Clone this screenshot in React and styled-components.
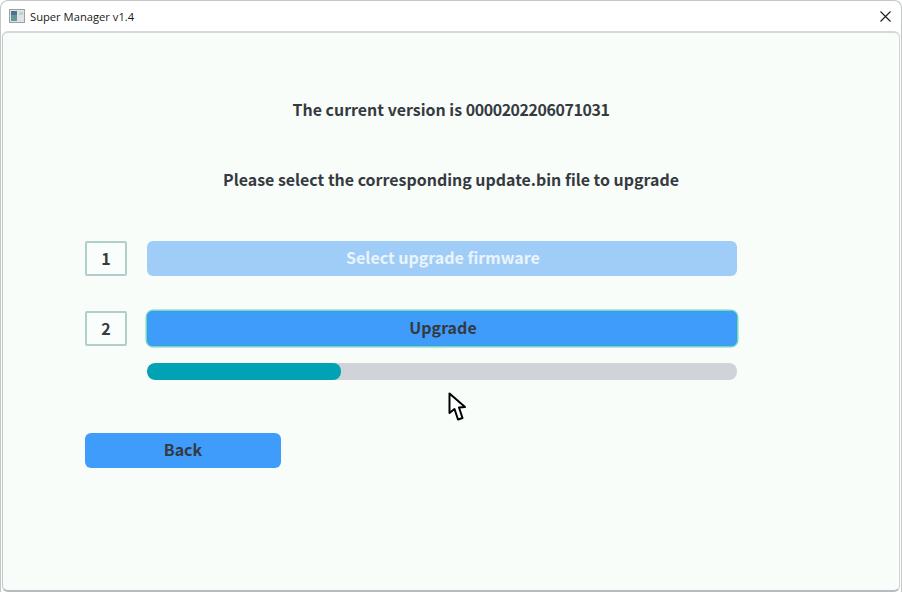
import React from 'react';
import styled, {createGlobalStyle} from 'styled-components';

const GlobalStyle = createGlobalStyle`
  html, body {
    margin: 0;
    padding: 0;
    background: #fff;
  }
  * {
    box-sizing: border-box;
  }
`;

export default function App() {
  return (
    <>
      <GlobalStyle />
      <Window>
        <TitleBar>
          <AppIcon viewBox="0 0 16 16">
            <rect x="0.5" y="1.5" width="15" height="13" fill="#dfe3e5" stroke="#9aa1a5" />
            <rect x="2" y="3" width="6" height="10" fill="#5f9a98" />
            <rect x="2" y="3" width="6" height="4" fill="#4f7286" />
            <rect x="10" y="4" width="4" height="3" fill="#b5d8c2" />
          </AppIcon>
          <Title>Super Manager v1.4</Title>
          <CloseIcon viewBox="0 0 11 11">
            <path d="M0.5 0.5 L10.5 10.5 M10.5 0.5 L0.5 10.5" stroke="#1a1a1a" strokeWidth="1.1" fill="none" />
          </CloseIcon>
        </TitleBar>
        <Panel>
          <Message>
            The current version is <VersionNumber>0000202206071031</VersionNumber>
          </Message>
          <Message $top={46}>Please select the corresponding update.bin file to upgrade</Message>
          <Steps>
            <StepRow>
              <StepNumber>1</StepNumber>
              <ActionButton disabled>Select upgrade firmware</ActionButton>
            </StepRow>
            <StepRow>
              <StepNumber>2</StepNumber>
              <ActionButton $focused>Upgrade</ActionButton>
            </StepRow>
            <ProgressTrack>
              <ProgressFill style={{width: '32.9%'}} />
            </ProgressTrack>
          </Steps>
          <BackButton>Back</BackButton>
        </Panel>
        <Cursor viewBox="0 0 20 32">
          <path
            d="M2.5 2.5 L2.5 22 L7.5 18 L11 28.5 L15.5 27 L12 16.5 L18 16 Z"
            fill="#fff"
            stroke="#000"
            strokeWidth="2"
            strokeLinejoin="round"
          />
        </Cursor>
      </Window>
    </>
  );
}

const Window = styled.div`
  position: relative;
  width: 902px;
  height: 592px;
  display: flex;
  flex-direction: column;
  background: #fff;
  border: 1px solid #c4c6c8;
  border-bottom: none;
  border-radius: 8px 8px 0 0;
  overflow: hidden;
`;

const TitleBar = styled.div`
  height: 30px;
  flex-shrink: 0;
  display: flex;
  align-items: center;
  padding: 0 10px 0 8px;
`;

const AppIcon = styled.svg`
  width: 16px;
  height: 16px;
  margin-right: 5px;
`;

const Title = styled.span`
  flex: 1;
  font-family: "Open Sans", "Noto Sans", sans-serif;
  font-size: 11.2px;
  color: #1a1a1a;
`;

const CloseIcon = styled.svg`
  width: 11px;
  height: 11px;
`;

const Panel = styled.div`
  flex: 1;
  margin: 0 1px 0 1px;
  padding: 64px 82px 0;
  display: flex;
  flex-direction: column;
  background: #f8fdfa;
  border-style: solid;
  border-width: 2px 1px 2px 1px;
  border-color: #cfdae0 #cdd3d6 #b4bcbf #c2c9cc;
  border-radius: 6px;
  font-family: "Noto Sans CJK SC", "Noto Sans", sans-serif;
  color: #353a40;
`;

const Message = styled.div`
  margin: ${(p) => p.$top || 0}px -82px 0;
  line-height: 24px;
  font-size: 15.95px;
  font-weight: 700;
  text-align: center;
`;

const VersionNumber = styled.span`
  letter-spacing: -0.42px;
`;

const Steps = styled.div`
  margin-top: 50px;
  display: flex;
  flex-direction: column;
`;

const StepRow = styled.div`
  display: flex;
  align-items: center;
  gap: 20px;
  height: 35px;
  margin-bottom: 35px;
`;

const StepNumber = styled.div`
  width: 42px;
  height: 35px;
  display: flex;
  align-items: center;
  justify-content: center;
  padding-bottom: 2px;
  background: #f9fdfb;
  border: 2px solid #b0cfca;
  border-radius: 2px;
  font-size: 16px;
  font-weight: 700;
`;

const ActionButton = styled.button`
  width: 590px;
  height: 35px;
  border: none;
  border-radius: 6px;
  background: #409cfb;
  color: #353a40;
  font-family: inherit;
  font-size: 16px;
  font-weight: 700;
  padding: 0 0 4px 2px;
  box-shadow: ${(p) =>
    p.$focused ? '0 0 0 1.5px #7ed0d2, inset 0 0 0 1px #2fa8d8' : 'none'};
  &:disabled {
    background: #a0cdf8;
    color: #eaf4fc;
  }
`;

const ProgressTrack = styled.div`
  width: 590px;
  height: 17px;
  margin: -18px 0 0 62px;
  border-radius: 8px;
  background: #d0d3d8;
  overflow: hidden;
`;

const ProgressFill = styled.div`
  height: 100%;
  border-radius: 8px;
  background: #00a2b3;
`;

const BackButton = styled(ActionButton)`
  width: 196px;
  margin-top: 53px;
  padding-left: 0;
`;

const Cursor = styled.svg`
  position: absolute;
  left: 446px;
  top: 390px;
  width: 20px;
  height: 32px;
`;
